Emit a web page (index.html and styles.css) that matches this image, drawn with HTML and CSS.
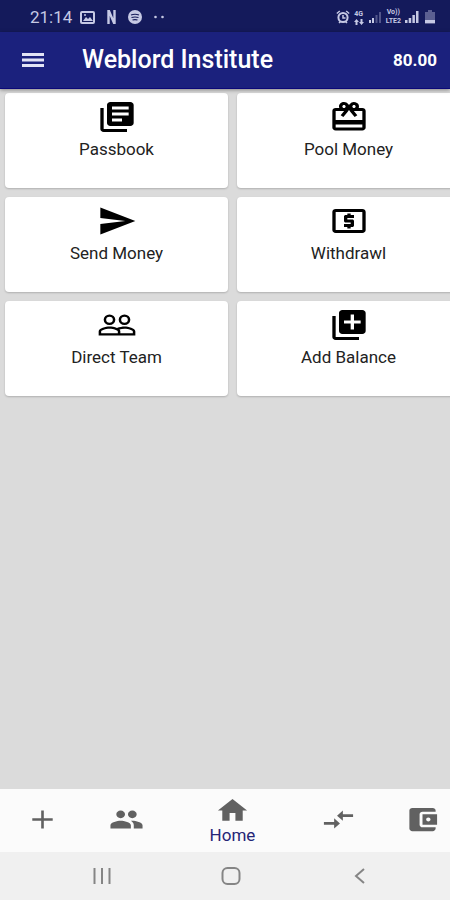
FILE: index.html
```html
<!DOCTYPE html>
<html lang="en">
<head>
<meta charset="utf-8">
<meta name="viewport" content="width=device-width, initial-scale=1">
<title>Weblord Institute</title>
<link rel="stylesheet" href="styles.css">
</head>
<body>
<div class="status">
  <div class="status-left">
    <span class="time">21:14</span>
    <svg width="15" height="13" viewBox="0 0 15 13"><rect x="1" y="1" width="13" height="11" rx="1" fill="none" stroke="currentColor" stroke-width="2"/><path d="M3 10l3-4 2 2 2-2 3 4z" fill="currentColor"/><circle cx="5" cy="4" r="1" fill="currentColor"/></svg>
    <svg width="9" height="14" viewBox="0 0 9 14"><path d="M1.500 14V0M7.500 14V0M1.500 0l6 14" fill="none" stroke="currentColor" stroke-width="2.400"/></svg>
    <svg width="14" height="14" viewBox="0 0 14 14"><circle cx="7" cy="7" r="7" fill="currentColor"/><path d="M3 5q4-1.500 8 0M3.500 7.500q3.500-1 7 0M4.500 10q2.500-.8 5 0" fill="none" stroke="#141a57" stroke-width="1.200"/></svg>
    <svg width="10" height="14" viewBox="0 0 10 14"><circle cx="1.500" cy="7" r="1.300" fill="currentColor"/><circle cx="8.500" cy="7" r="1.300" fill="currentColor"/></svg>
  </div>
  <div class="status-right">
    <svg width="14" height="14" viewBox="0 0 14 14"><circle cx="7" cy="7.500" r="4.600" fill="none" stroke="currentColor" stroke-width="2"/><path d="M7 5v3h2.500M.8 3.500l3-2.500M13.200 3.500l-3-2.500M3 13l1.500-1.500M11 13l-1.500-1.500" fill="none" stroke="currentColor" stroke-width="1.500"/></svg>
    <span class="net"><span>4G</span><svg width="10" height="6" viewBox="0 0 10 6"><path d="M0 3l2.500-3L5 3H3.500v3h-2V3zM5 3l2.500 3L10 3H8.500V0h-2v3z" fill="currentColor"/></svg></span>
    <svg width="14" height="12" viewBox="0 0 14 12"><path d="M1 9h2v3H1zM4 7h2v5H4z" fill="currentColor"/><path d="M7.500 4h2v8h-2zM11 1h2v11h-2z" fill="currentColor" opacity=".35"/></svg>
    <span class="net"><span>Vo))</span><span>LTE2</span></span>
    <svg width="14" height="12" viewBox="0 0 14 12"><path d="M0 9h2.500v3H0zM3.700 7h2.500v5H3.700zM7.400 4h2.500v8H7.400zM11 0h2.500v12H11z" fill="currentColor"/></svg>
    <svg class="battery" width="10" height="14" viewBox="0 0 10 14"><path d="M3 0h4v2h3v12H0V2h3z" fill="currentColor" opacity=".4"/><path d="M0 10h10v3H0z" fill="currentColor"/></svg>
  </div>
</div>
<header class="bar">
  <button class="menu" aria-label="Menu"><svg width="22" height="14" viewBox="0 0 22 14"><path d="M0 1.500h22M0 7h22M0 12.500h22" stroke="currentColor" stroke-width="2.800"/></svg></button>
  <h1>Weblord Institute</h1>
  <span class="amount">80.00</span>
</header>
<main class="content">
  <div class="grid">
    <button class="card"><svg class="icon" viewBox="0 0 24 24" preserveAspectRatio="none"><path d="M4 6H2v14c0 1.100.9 2 2 2h14v-2H4V6zm16-4H8c-1.100 0-2 .9-2 2v12c0 1.100.9 2 2 2h12c1.100 0 2-.9 2-2V4c0-1.100-.9-2-2-2zm-1 9H9V9h10v2zm-4 4H9v-2h6v2zm4-8H9V5h10v2z"/></svg><span>Passbook</span></button>
    <button class="card"><svg class="icon" viewBox="0 0 24 24" preserveAspectRatio="none"><path d="M20 6h-2.180c.11-.31.18-.65.18-1a2.996 2.996 0 0 0-5.500-1.650l-.5.67-.5-.68C10.960 2.540 10.050 2 9 2 7.340 2 6 3.340 6 5c0 .35.07.69.18 1H4c-1.110 0-1.990.89-1.990 2L2 19c0 1.110.89 2 2 2h16c1.110 0 2-.89 2-2V8c0-1.110-.89-2-2-2zm-5-2c.55 0 1 .45 1 1s-.45 1-1 1-1-.45-1-1 .45-1 1-1zM9 4c.55 0 1 .45 1 1s-.45 1-1 1-1-.45-1-1 .45-1 1-1zm11 15H4v-2h16v2zm0-5H4V8h5.080L7 10.830 8.620 12 11 8.760l1-1.360 1 1.360L15.380 12 17 10.830 14.920 8H20v6z"/></svg><span>Pool Money</span></button>
    <button class="card"><svg class="icon" viewBox="0 0 24 24" preserveAspectRatio="none"><path d="M2.010 21L23 12 2.010 3 2 10l15 2-15 2z"/></svg><span>Send Money</span></button>
    <button class="card"><svg class="icon" viewBox="0 0 24 24" preserveAspectRatio="none"><path d="M11 17h2v-1h1c.55 0 1-.45 1-1v-3c0-.55-.45-1-1-1h-3v-1h4V8h-2V7h-2v1h-1c-.55 0-1 .45-1 1v3c0 .55.45 1 1 1h3v1H9v2h2v1zm9-13H4c-1.110 0-1.990.89-1.990 2L2 18c0 1.110.89 2 2 2h16c1.110 0 2-.89 2-2V6c0-1.110-.89-2-2-2zm0 14H4V6h16v12z"/></svg><span>Withdrawl</span></button>
    <button class="card"><svg class="icon" viewBox="0 0 24 24" preserveAspectRatio="none"><path fill-rule="evenodd" d="M16.500 13c-1.200 0-3.070.34-4.500 1-1.430-.67-3.300-1-4.500-1C5.330 13 1 14.080 1 16.250V19h22v-2.750c0-2.170-4.330-3.250-6.500-3.250zm-4 4.500h-10v-1.250c0-.54 2.560-1.750 5-1.750s5 1.210 5 1.750v1.250zm9 0H14v-1.250c0-.46-.2-.86-.52-1.220.88-.3 1.960-.53 3.020-.53 2.440 0 5 1.210 5 1.750v1.250z"/><circle cx="7.500" cy="8.500" r="2.750" fill="none" stroke="currentColor" stroke-width="1.500"/><circle cx="16.500" cy="8.500" r="2.750" fill="none" stroke="currentColor" stroke-width="1.500"/></svg><span>Direct Team</span></button>
    <button class="card"><svg class="icon" viewBox="0 0 24 24" preserveAspectRatio="none"><path d="M4 6H2v14c0 1.100.9 2 2 2h14v-2H4V6zm16-4H8c-1.100 0-2 .9-2 2v12c0 1.100.9 2 2 2h12c1.100 0 2-.9 2-2V4c0-1.100-.9-2-2-2zm-1 9h-4v4h-2v-4H9V9h4V5h2v4h4v2z"/></svg><span>Add Balance</span></button>
  </div>
</main>
<nav class="tabs">
  <button class="tab" aria-label="Add"><svg viewBox="0 0 24 24" preserveAspectRatio="none"><path d="M19 12.900h-6.100V19h-1.800v-6.100H5v-1.800h6.100V5h1.800v6.100H19z"/></svg></button>
  <button class="tab" aria-label="Team"><svg viewBox="0 0 24 24" preserveAspectRatio="none"><path d="M16 11c1.660 0 2.990-1.340 2.990-3S17.660 5 16 5s-3 1.340-3 3 1.340 3 3 3zm-8 0c1.660 0 2.990-1.340 2.990-3S9.660 5 8 5 5 6.340 5 8s1.340 3 3 3zm0 2c-2.330 0-7 1.170-7 3.500V19h14v-2.500c0-2.330-4.670-3.500-7-3.500zm8 0c-.29 0-.62.02-.97.05 1.160.84 1.970 1.970 1.970 3.450V19h6v-2.500c0-2.330-4.670-3.500-7-3.500z"/></svg></button>
  <button class="tab"><svg viewBox="0 0 24 24" preserveAspectRatio="none"><path d="M10 20v-6h4v6h5v-8h3L12 3 2 12h3v8z"/></svg><span>Home</span></button>
  <button class="tab" aria-label="Transfer"><svg viewBox="0 0 24 24" preserveAspectRatio="none"><path d="M9.010 14H2v2h7.010v3L13 15l-3.990-4v3zm5.980-1v-3H22V8h-7.010V5L11 9l3.990 4z"/></svg></button>
  <button class="tab" aria-label="Wallet"><svg viewBox="0 0 24 24" preserveAspectRatio="none"><path d="M21 18v1c0 1.100-.9 2-2 2H5c-1.110 0-2-.9-2-2V5c0-1.100.89-2 2-2h14c1.100 0 2 .9 2 2v1h-9c-1.110 0-2 .9-2 2v8c0 1.100.89 2 2 2h9zm-9-2h10V8H12v8zm4-2.500c-.83 0-1.500-.67-1.500-1.500s.67-1.500 1.500-1.500 1.500.67 1.500 1.500-.67 1.500-1.500 1.500z"/></svg></button>
</nav>
<nav class="system">
  <button aria-label="Recent apps"><svg width="18" height="16" viewBox="0 0 18 16"><path d="M1.500 0v16M9 0v16M16.500 0v16"/></svg></button>
  <button aria-label="Home screen"><svg width="20" height="18" viewBox="0 0 20 18"><rect x="1.500" y="1" width="17" height="16" rx="5"/></svg></button>
  <button aria-label="Back"><svg width="12" height="16" viewBox="0 0 12 16"><path d="M10 1L2 8l8 7"/></svg></button>
</nav>
</body>
</html>
```
FILE: styles.css
```css
* {
  box-sizing: border-box;
}

body {
  margin: 0;
  min-height: 100vh;
  display: flex;
  flex-direction: column;
  overflow-x: hidden;
  background: #dbdbdb;
  font-family: Roboto, "Liberation Sans", sans-serif;
}

button {
  border: 0;
  padding: 0;
  background: none;
  color: inherit;
  font: inherit;
}

svg {
  display: block;
  flex: none;
}

.status {
  height: 32px;
  padding: 2px 15px 0 30px;
  display: flex;
  align-items: center;
  justify-content: space-between;
  background: #141a5b;
  color: #c6c9e4;
}

.status-left {
  display: flex;
  align-items: center;
  gap: 12px;
}

.time {
  margin-right: -4px;
  font-size: 17px;
}

.status-right {
  display: flex;
  align-items: center;
  gap: 4px;
}

.net {
  display: flex;
  flex-direction: column;
  align-items: center;
  font-size: 7px;
  font-weight: 700;
  line-height: 9px;
}

.battery {
  margin-left: 2px;
}

.bar {
  position: relative;
  height: 57px;
  padding: 0 13px 0 22px;
  display: flex;
  align-items: center;
  background: #1b217d;
  border-bottom: 1px solid #0b0878;
  box-shadow: 0 1px 4px rgba(0, 0, 0, 0.4);
  color: #fff;
}

.menu {
  color: #e2e4f6;
}

.bar h1 {
  flex: 1;
  margin: 0 0 0 38px;
  font-size: 25px;
  font-weight: 500;
  line-height: 32px;
}

.amount {
  font-size: 17px;
  font-weight: 700;
}

.content {
  flex: 1;
  overflow: hidden;
}

.grid {
  margin: 4px -10px 0 5px;
  display: grid;
  grid-template-columns: 1fr 1fr;
  gap: 9px;
}

.card {
  min-height: 95px;
  padding-top: 6px;
  display: flex;
  flex-direction: column;
  align-items: center;
  justify-content: flex-start;
  gap: 3px;
  border-radius: 4px;
  background: #fff;
  box-shadow: 0 1px 2px rgba(0, 0, 0, 0.2);
  color: #000;
  font-size: 17px;
  line-height: 22px;
}

.card span {
  color: #222;
}

.icon {
  width: 40px;
  height: 36px;
  fill: currentColor;
}

.tabs {
  height: 63px;
  margin-right: -15px;
  padding-bottom: 2px;
  display: grid;
  grid-template-columns: 2fr 2fr 3fr 2fr 2fr;
  background: #fbfbfb;
}

.tab {
  display: flex;
  flex-direction: column;
  align-items: center;
  justify-content: center;
  color: #252576;
  font-size: 17px;
  line-height: 18px;
}

.tab svg {
  width: 35px;
  height: 31px;
  fill: #616161;
}

.system {
  height: 48px;
  margin-right: -12px;
  display: grid;
  grid-template-columns: repeat(3, 28%);
  justify-content: center;
  background: #f0f0f0;
}

.system button {
  display: flex;
  align-items: center;
  justify-content: center;
}

.system svg {
  fill: none;
  stroke: #858585;
  stroke-width: 2;
}
```
